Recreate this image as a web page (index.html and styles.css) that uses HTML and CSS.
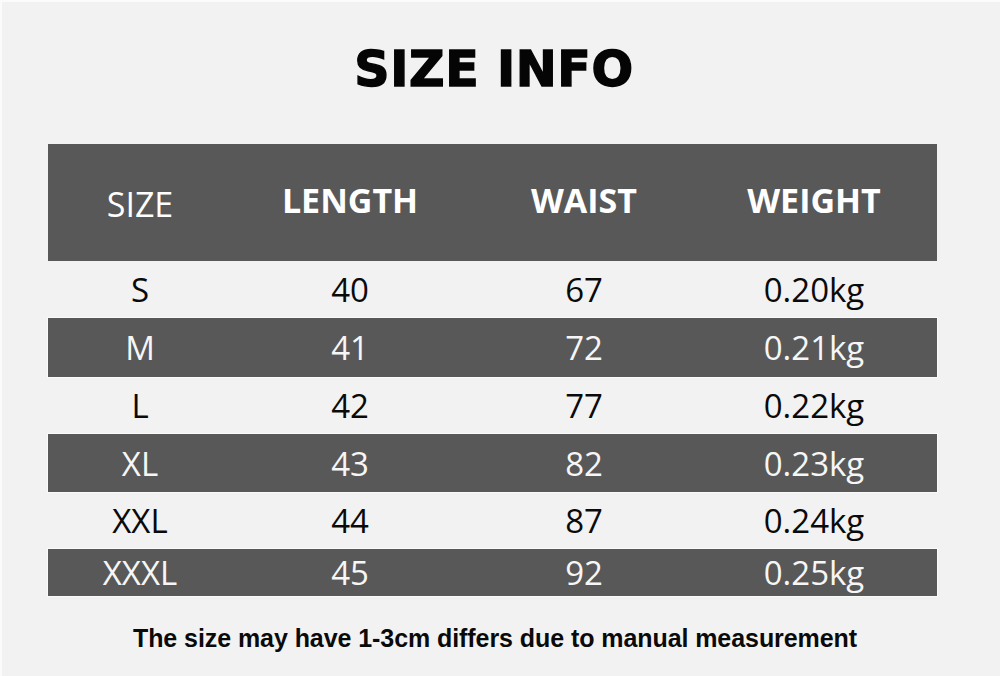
FILE: index.html
```html
<!DOCTYPE html>
<html>
<head>
<meta charset="utf-8">
<link rel="stylesheet" href="styles.css">
</head>
<body>
<div class="page">
  <h1 class="title">SIZE INFO</h1>
  <div class="table">
    <div class="row head">
      <div class="cell size">SIZE</div>
      <div class="cell">LENGTH</div>
      <div class="cell">WAIST</div>
      <div class="cell">WEIGHT</div>
    </div>
    <div class="row light"><div class="cell">S</div><div class="cell">40</div><div class="cell">67</div><div class="cell">0.20kg</div></div>
    <div class="row dark m"><div class="cell">M</div><div class="cell">41</div><div class="cell">72</div><div class="cell">0.21kg</div></div>
    <div class="row light"><div class="cell">L</div><div class="cell">42</div><div class="cell">77</div><div class="cell">0.22kg</div></div>
    <div class="row dark"><div class="cell">XL</div><div class="cell">43</div><div class="cell">82</div><div class="cell">0.23kg</div></div>
    <div class="row light short"><div class="cell">XXL</div><div class="cell">44</div><div class="cell">87</div><div class="cell">0.24kg</div></div>
    <div class="row dark last"><div class="cell">XXXL</div><div class="cell">45</div><div class="cell">92</div><div class="cell">0.25kg</div></div>
  </div>
  <p class="note">The size may have 1-3cm differs due to manual measurement</p>
</div>
</body>
</html>
```
FILE: styles.css
```css
html, body {
  margin: 0;
  padding: 0;
  background: #f2f2f2;
}
.page {
  width: 1000px;
  height: 676px;
  box-sizing: border-box;
  border-left: 2px solid #fbfbfb;
  border-top: 2px solid #fbfbfb;
  padding-top: 44px;
  overflow: hidden;
}
.title {
  margin: 0 0 50px 0;
  padding-right: 14px;
  font-family: "DejaVu Sans", sans-serif;
  font-weight: 700;
  font-size: 49px;
  line-height: 48px;
  text-align: center;
  color: #050505;
  -webkit-text-stroke: 1.4px #050505;
  letter-spacing: 0.6px;
}
.table {
  margin-left: 46px;
  width: 889px;
  font-family: "Open Sans", sans-serif;
}
.row {
  display: grid;
  grid-template-columns: 184px 236px 232px 228px;
  align-items: center;
  height: 58px;
  font-size: 33px;
  color: #0a0a0a;
}
.cell {
  text-align: center;
}
.head {
  height: 117px;
  background: #585858;
  color: #ffffff;
  font-size: 34px;
  font-weight: 700;
}
.head .cell {
  padding-bottom: 6px;
}
.head .size {
  font-weight: 400;
  padding-top: 2px;
  padding-bottom: 0;
}
.light {
  height: 57px;
}
.m {
  height: 59px;
}
.short {
  height: 57px;
}
.dark {
  background: #585858;
  color: #f6f6f6;
  box-shadow: 0 0 0 1px #fafafa;
}
.last {
  height: 47px;
}
.note {
  margin: 27px 0 0 0;
  padding-right: 12px;
  font-family: "Liberation Sans", sans-serif;
  font-weight: 700;
  font-size: 25px;
  line-height: 30px;
  letter-spacing: -0.07px;
  text-align: center;
  color: #0a0a0a;
}
```
